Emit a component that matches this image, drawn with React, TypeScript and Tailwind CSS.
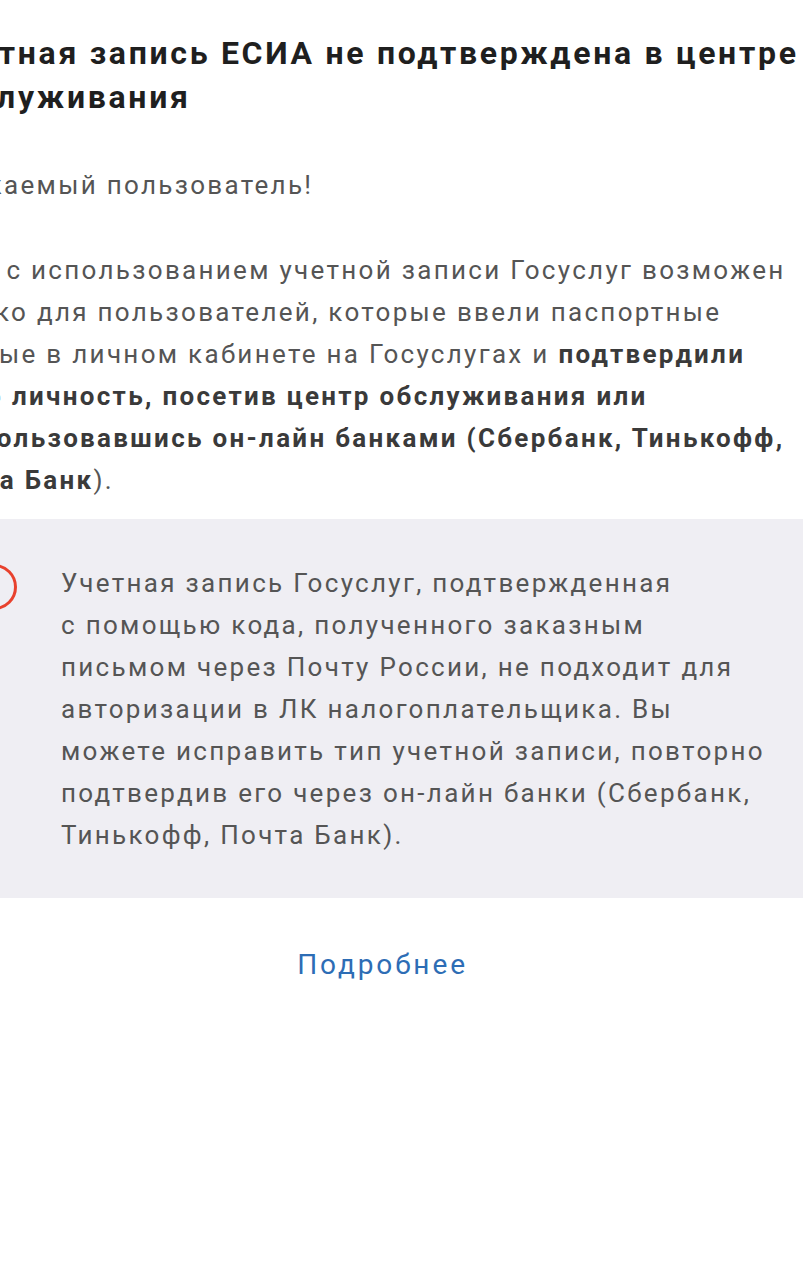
import React from "react";

export default function App() {
  return (
    <div className="w-[803px] h-[1280px] overflow-hidden bg-white font-['Roboto',sans-serif]">
      <div className="ml-[-70px] w-[960px] pt-[31px]">
        <h1 className="ml-[6px] text-[32px] leading-[44px] font-bold tracking-[2.7px] text-[#1f1f1f] whitespace-nowrap">
          Учетная запись ЕСИА не подтверждена в центре
          <br />
          обслуживания
        </h1>

        <p className="mt-[45px] text-[26px] leading-[42px] tracking-[2.3px] text-[#555555] whitespace-nowrap">
          Уважаемый пользователь!
        </p>

        <p className="mt-[43px] text-[26px] leading-[42px] tracking-[2.3px] text-[#555555] whitespace-nowrap">
          Вход с использованием учетной записи Госуслуг возможен
          <br />
          только для пользователей, которые ввели паспортные
          <br />
          данные в личном кабинете на Госуслугах и{" "}
          <b className="font-bold text-[#3a3a3a]">подтвердили</b>
          <br />
          <b className="font-bold text-[#3a3a3a]">
            свою личность, посетив центр обслуживания или
          </b>
          <br />
          <b className="font-bold text-[#3a3a3a]">
            воспользовавшись он-лайн банками (Сбербанк, Тинькофф,
          </b>
          <br />
          <b className="font-bold text-[#3a3a3a]">Почта Банк</b>).
        </p>

        <div className="mt-[18px] w-[873px] bg-[#efeef3] flex gap-[44px] pl-[41px] pt-[43px] pb-[42px]">
          <div className="w-[46px] h-[46px] shrink-0 rounded-full border-[3px] border-[#e8412d] mt-[2px]" />
          <p className="text-[26px] leading-[42px] tracking-[2.3px] text-[#555555] whitespace-nowrap">
            Учетная запись Госуслуг, подтвержденная
            <br />
            с помощью кода, полученного заказным
            <br />
            письмом через Почту России, не подходит для
            <br />
            авторизации в ЛК налогоплательщика. Вы
            <br />
            можете исправить тип учетной записи, повторно
            <br />
            подтвердив его через он-лайн банки (Сбербанк,
            <br />
            Тинькофф, Почта Банк).
          </p>
        </div>

        <div className="flex justify-center w-[905px] mt-[47px]">
          <a className="text-[28px] leading-[40px] tracking-[2.9px] text-[#2d6db5]">Подробнее</a>
        </div>
      </div>
    </div>
  );
}
